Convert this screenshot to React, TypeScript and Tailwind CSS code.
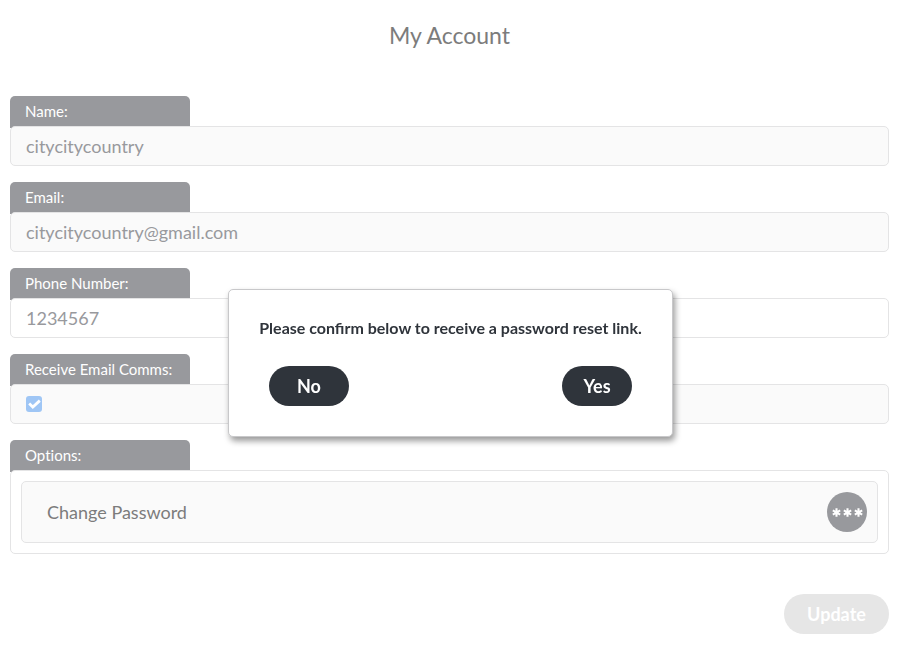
import { useState, type ReactNode } from "react";

const tab = "flex h-[30px] items-center px-[15px] text-[15px] text-white [font-variant-ligatures:none]";
const box = "relative -mt-[5px] rounded-[5px] border border-[#e4e4e5]";
const input = `${box} block h-10 w-full px-[15px] text-[18px] text-[#98999d] outline-none`;
const pill = "h-10 rounded-full text-[18px] font-bold text-white";

function Field({ id, title, children }: { id?: string; title: string; children: ReactNode }) {
  return (
    <div className="mb-4">
      <div className="h-[35px] w-[180px] rounded-t-[5px] bg-[linear-gradient(#98999d_0_0)] bg-size-[100%_32px] bg-no-repeat">
        {id ? (
          <label htmlFor={id} className={tab}>{title}</label>
        ) : (
          <h2 className={tab}>{title}</h2>
        )}
      </div>
      {children}
    </div>
  );
}

function Asterisk() {
  return (
    <svg viewBox="0 0 10 10" className="size-[9px]" fill="none" stroke="currentColor" strokeWidth="2.3" aria-hidden="true">
      <path d="M5 0.2V9.8M0.9 2.6L9.1 7.4M9.1 2.6L0.9 7.4" />
    </svg>
  );
}

export default function App() {
  const [name, setName] = useState("citycitycountry");
  const [phone, setPhone] = useState("1234567");
  const [comms, setComms] = useState(true);
  return (
    <div className="min-h-screen bg-white font-['Lato',sans-serif]">
      <main className="pr-[13px] pb-[18px] pl-[10px]">
        <h1 className="pt-5 pb-[46px] text-center text-[23px] leading-[30px] text-[#7c7c7c]">My Account</h1>
        <form>
          <Field id="name" title="Name:">
            <input id="name" className={`${input} bg-[#fafafa]`} value={name} onChange={(e) => setName(e.target.value)} />
          </Field>
          <Field id="email" title="Email:">
            <input id="email" type="email" readOnly className={`${input} bg-[#fafafa]`} value="citycitycountry@gmail.com" />
          </Field>
          <Field id="phone" title="Phone Number:">
            <input id="phone" type="tel" className={`${input} bg-white`} value={phone} onChange={(e) => setPhone(e.target.value)} />
          </Field>
          <Field id="comms" title="Receive Email Comms:">
            <div className={`${box} flex h-10 items-center bg-[#fafafa] px-[15px]`}>
              <span className="grid size-4">
                <input
                  id="comms"
                  type="checkbox"
                  className="col-start-1 row-start-1 size-4 appearance-none rounded-[3px] bg-[#c8c8c8] checked:bg-[#9fc6f5]"
                  checked={comms}
                  onChange={(e) => setComms(e.target.checked)}
                />
                {comms && (
                  <svg viewBox="0 0 16 16" className="pointer-events-none col-start-1 row-start-1 size-4" fill="none" stroke="#fff" strokeWidth="2.8" aria-hidden="true">
                    <path d="M3.2 7.6L6.8 11L13.8 4.6" />
                  </svg>
                )}
              </span>
            </div>
          </Field>
          <Field title="Options:">
            <div className={`${box} bg-white p-[10px]`}>
              <button type="button" className="flex w-full items-center justify-between rounded-[5px] border border-[#e4e4e5] bg-[#fafafa] py-[10px] pr-[10px] pl-[25px] text-[18px] text-[#7c7c7c]">
                Change Password
                <span className="flex size-10 items-center justify-center gap-[2px] rounded-full bg-[#98999d] text-white">
                  <Asterisk />
                  <Asterisk />
                  <Asterisk />
                </span>
              </button>
            </div>
          </Field>
          <div className="flex justify-end pt-6">
            <button type="button" className={`${pill} w-[105px] bg-[#e6e6e6]`}>Update</button>
          </div>
        </form>
      </main>
      <div className="fixed inset-0 flex items-start justify-center pt-[289px] pr-px">
        <div
          role="dialog"
          aria-modal="true"
          aria-labelledby="prompt"
          className="w-[445px] rounded-[5px] border border-[#c8c8ca] bg-white px-[30px] pt-[26px] pb-[30px] shadow-[2px_4px_6px_rgba(0,0,0,0.4)]"
        >
          <p id="prompt" className="text-center text-[16px] leading-6 font-bold whitespace-nowrap text-[#2f343b]">
            Please confirm below to receive a password reset link.
          </p>
          <div className="flex justify-between px-[10px] pt-[26px]">
            <button type="button" className={`${pill} w-20 bg-[#2f343b]`}>No</button>
            <button type="button" className={`${pill} w-[70px] bg-[#2f343b]`}>Yes</button>
          </div>
        </div>
      </div>
    </div>
  );
}
